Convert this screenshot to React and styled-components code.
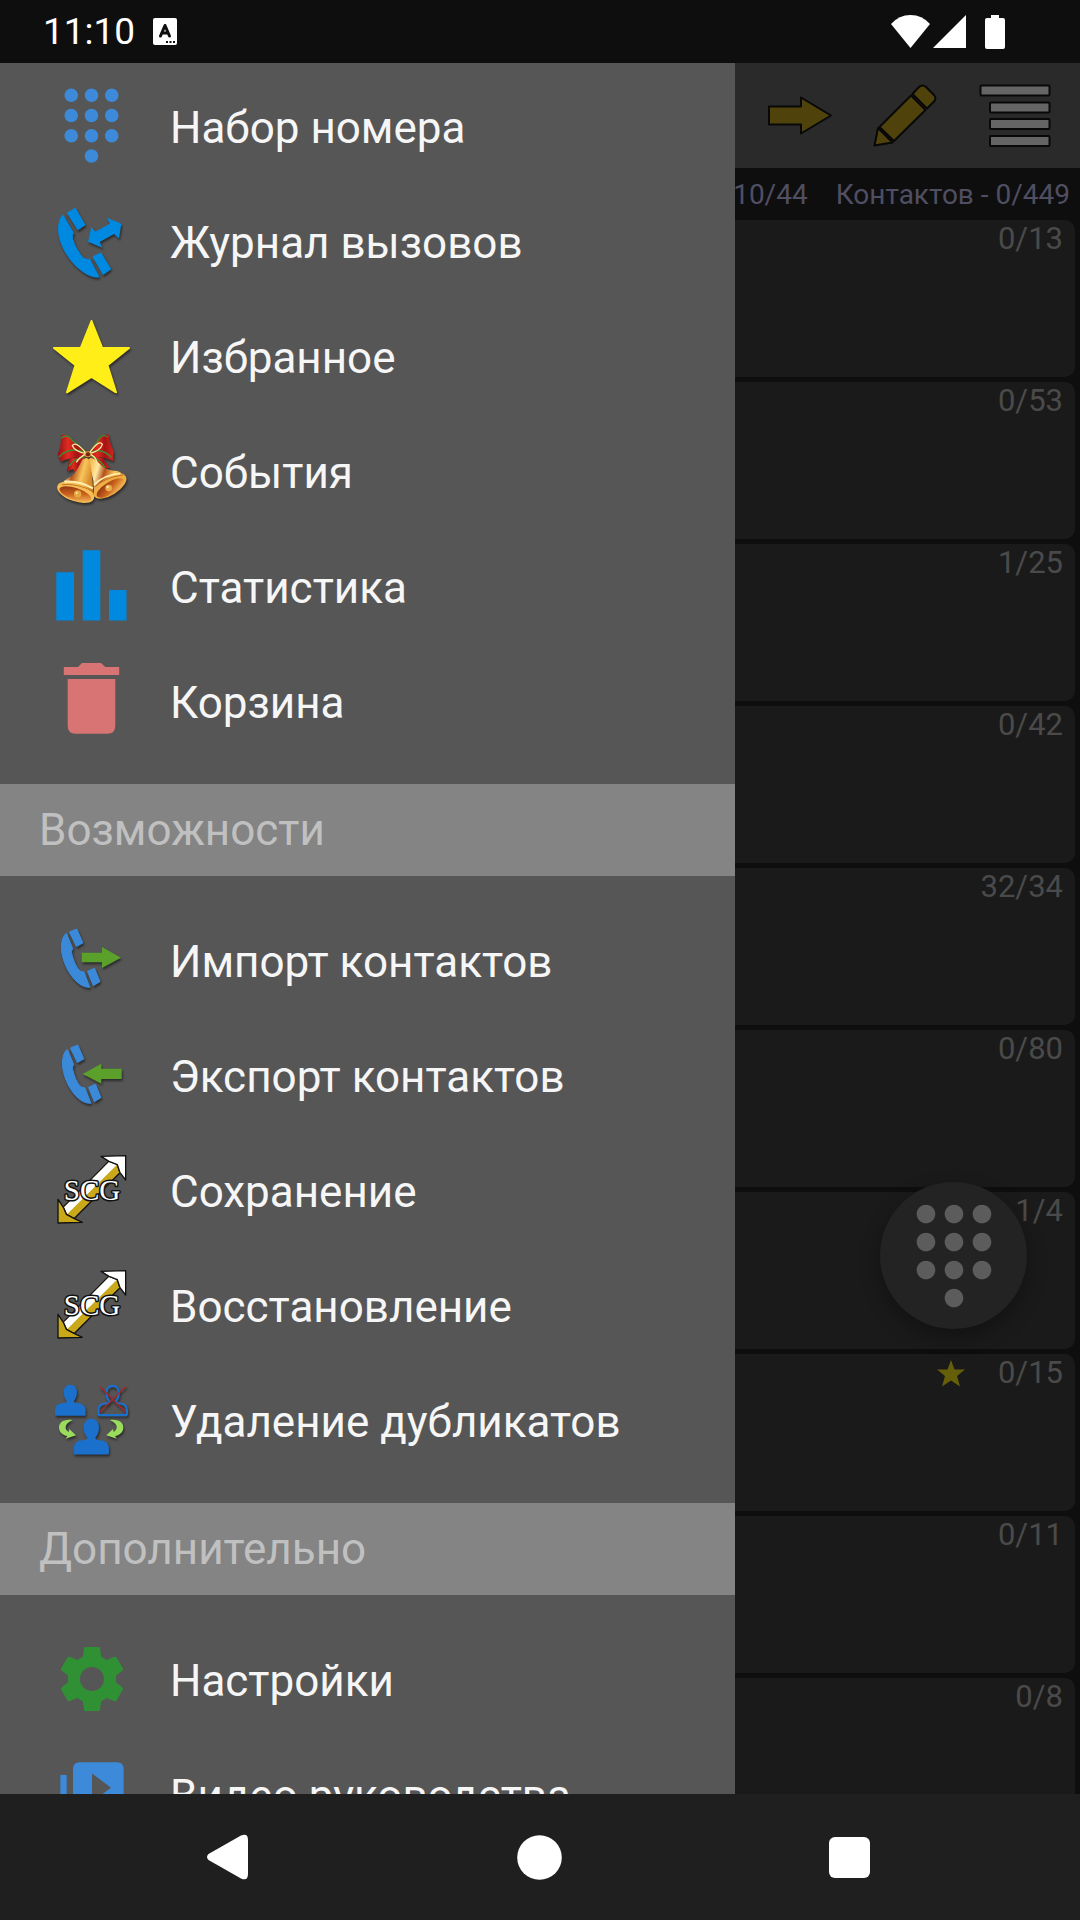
import React from "react";
import styled, { createGlobalStyle } from "styled-components";
import { MdDialpad, MdSettings, MdVideoLibrary } from "react-icons/md";

const GlobalStyle = createGlobalStyle`
  * {
    box-sizing: border-box;
  }

  body {
    margin: 0;
    background: #0e0e0e;
    font-family: Roboto, "Noto Sans", sans-serif;
  }

  button {
    border: 0;
    padding: 0;
    background: none;
    font: inherit;
    color: inherit;
  }

  svg {
    display: block;
    flex: none;
  }
`;

const Screen = styled.div`
  display: flex;
  flex-direction: column;
  height: 100vh;
  overflow: hidden;
`;

const StatusBar = styled.header`
  display: flex;
  align-items: center;
  flex: none;
  height: 63px;
  padding: 0 75px 0 43px;
  color: #fff;
  font-size: 37px;

  .badge {
    margin-left: 18px;
  }

  .signals {
    display: flex;
    margin-left: auto;
  }
`;

const Main = styled.main`
  position: relative;
  flex: 1;
  min-height: 0;
  overflow: hidden;
`;

const Toolbar = styled.div`
  display: flex;
  justify-content: flex-end;
  height: 105px;
  padding-right: 17px;
  background: #2a2a2a;
`;

const Totals = styled.div`
  display: flex;
  align-items: center;
  justify-content: flex-end;
  gap: 28px;
  height: 52px;
  padding-right: 10px;
  color: #504e62;
  font-size: 28px;
`;

const GroupList = styled.ul`
  display: flex;
  flex-direction: column;
  gap: 5px;
  margin: 0;
  padding: 0 5px;
  list-style: none;
`;

const GroupCard = styled.li`
  display: flex;
  align-items: flex-start;
  justify-content: flex-end;
  gap: 33px;
  height: 157px;
  padding-right: 12px;
  border-radius: 10px;
  background: #1a1a1a;
  color: #4a4a4a;
  font-size: 31px;
  line-height: 38px;
`;

const DialButton = styled.button`
  position: absolute;
  right: 53px;
  bottom: 465px;
  display: flex;
  align-items: center;
  justify-content: center;
  width: 147px;
  height: 147px;
  border-radius: 50%;
  background: #232323;
  color: #5c5c5c;
  box-shadow: 0 8px 20px rgba(0, 0, 0, 0.3);
`;

const Drawer = styled.nav`
  position: absolute;
  top: 0;
  bottom: 0;
  left: 0;
  width: 735px;
  max-width: 85%;
  overflow: hidden;
  background: #565656;
`;

const MenuGroup = styled.div`
  padding: ${({ $first }) => ($first ? "5px" : "26px")} 0 26px;
`;

const MenuTitle = styled.h2`
  display: flex;
  align-items: center;
  height: 92px;
  margin: 0;
  padding: 0 39px;
  background: #848484;
  color: #c0c0c0;
  font-size: 44px;
  font-weight: 400;
`;

const MenuItem = styled.button`
  display: flex;
  align-items: center;
  gap: 38px;
  width: 100%;
  height: 115px;
  padding: 0 51px;
  color: #f6f6f6;
  font-size: 44px;
  text-align: left;
  white-space: nowrap;
`;

const IconSlot = styled.span`
  display: flex;
  align-items: center;
  justify-content: center;
  flex: none;
  width: 81px;
  height: 81px;
`;

const MenuLabel = styled.span`
  padding-top: 4px;
`;

const NavBar = styled.footer`
  display: flex;
  flex: none;
  height: 126px;
  padding: 0 75px 0 73px;
  background: #1f1f1f;

  button {
    display: flex;
    flex: 1;
    align-items: center;
    justify-content: center;
  }
`;

const Shadowed = styled.svg`
  overflow: visible;
  filter: drop-shadow(1px 2px 1px rgba(0, 0, 0, 0.5));
`;

const CallLogIcon = () => (
  <Shadowed width="81" height="81" viewBox="0 0 81 81" fill="#0089e0" stroke="#0089e0" strokeLinejoin="round">
    <path d="M12.3 15.5 22.5 33.3Q20.5 35.5 21.6 39C24 47 28 53.5 32.3 58L35 59.5 38.5 59 48 77C32 79 7.5 52 7.5 29Q8 19 11.5 15.5Z" />
    <path strokeWidth="2" d="M17 13 24 9 33.3 24.7 27 29Z" />
    <path strokeWidth="2" d="M42.7 57 49.7 53.7 59 69 52.3 73.7Z" />
    <path
      strokeWidth="0"
      d="M70.3 23.7 56 17.7 58.7 23.7 44.3 31.7 40.3 27 37 41.7 51.3 47.7 48.7 42 63 34 68 38.5Z"
    />
  </Shadowed>
);

const Handset = () => (
  <g fill="#3b8ada" stroke="#3b8ada" strokeLinejoin="round">
    <path d="M15.5 14.5 21.7 29.5Q20 32 20.8 35C22.5 42 25 48 29 52L33 53 38.9 68.3C25 69.5 10.4 46 10.4 28Q10.8 18 15 14.5Z" />
    <path strokeWidth="2" d="M19.2 13.3 25.6 10.8 31.2 23.7 25.6 26.8Z" />
    <path strokeWidth="2" d="M37.2 52.6 43.2 50 48.3 62.3 42.6 66Z" />
  </g>
);

const ImportIcon = () => (
  <Shadowed width="81" height="81" viewBox="0 0 81 81">
    <Handset />
    <path fill="#5aa02a" d="M30.7 33.7H51V28L70 38.7 51 49V43.3H30.7Z" />
  </Shadowed>
);

const ExportIcon = () => (
  <Shadowed width="81" height="81" viewBox="0 0 81 81">
    <g transform="translate(1 1)">
      <Handset />
    </g>
    <path fill="#5aa02a" d="M31.7 40 50.3 29.7V34.7H70.7V45H50.3V49.7Z" />
  </Shadowed>
);

const StarIcon = () => (
  <Shadowed width="81" height="81" viewBox="0 0 81 81">
    <path
      fill="#ffee18"
      stroke="#ffee18"
      strokeWidth="2"
      strokeLinejoin="round"
      d="M40.5 6 51.3 33H78L56.5 50.3 65 77.3 40.5 62 16 77.3 24.5 50.3 3 33H29.7Z"
    />
  </Shadowed>
);

const BellsIcon = () => (
  <Shadowed width="81" height="81" viewBox="0 -5 243 243">
    <defs>
      <linearGradient id="gold" x1="0" x2="1" y1="0" y2="0.3">
        <stop offset="0" stopColor="#f3a934" />
        <stop offset="0.3" stopColor="#ffe9a0" />
        <stop offset="0.5" stopColor="#b5501c" />
        <stop offset="0.75" stopColor="#f9c65c" />
        <stop offset="1" stopColor="#d98a2b" />
      </linearGradient>
      <linearGradient id="ribbon" x1="0" x2="1" y1="0" y2="0">
        <stop offset="0" stopColor="#8f1012" />
        <stop offset="0.35" stopColor="#e22c22" />
        <stop offset="0.65" stopColor="#a51315" />
        <stop offset="1" stopColor="#cf261e" />
      </linearGradient>
      <linearGradient id="inside" x1="0" x2="1" y1="0" y2="1">
        <stop offset="0" stopColor="#7c2812" />
        <stop offset="0.5" stopColor="#c9601c" />
        <stop offset="1" stopColor="#ffd36a" />
      </linearGradient>
    </defs>
    {/* ribbon tails */}
    <path fill="url(#ribbon)" d="M55 82 98 72 100 98 76 128 66 112 48 120Z" />
    <path fill="url(#ribbon)" d="M122 72 156 80 176 108 160 110 152 128 136 116 122 100Z" />
    {/* back bell */}
    <path fill="url(#gold)" d="M112 84C120 72 134 84 154 104Q172 118 200 118L222 130 128 196Q132 140 116 112Z" />
    <ellipse cx="177" cy="164" rx="56" ry="26" transform="rotate(-32 177 164)" fill="#efad42" />
    <ellipse cx="178" cy="169" rx="47" ry="18" transform="rotate(-32 178 169)" fill="url(#inside)" />
    <path fill="none" stroke="#fff0b2" strokeWidth="5" d="M129 160Q156 130 208 125" />
    <path fill="none" stroke="#a65016" strokeWidth="2" d="M128 168Q160 138 216 130" />
    <circle cx="173" cy="169" r="10" fill="#eab04f" />
    <circle cx="170" cy="166" r="3" fill="#fff2c5" />
    {/* front bell */}
    <path fill="url(#gold)" d="M94 84Q110 72 116 88Q126 128 126 194L20 172Q38 144 62 134Q78 118 94 84Z" />
    <ellipse cx="74" cy="182" rx="58" ry="27" transform="rotate(19 74 182)" fill="#f5bf55" />
    <ellipse cx="73" cy="187" rx="50" ry="18" transform="rotate(19 73 187)" fill="url(#inside)" />
    <path fill="none" stroke="#fff0b2" strokeWidth="6" d="M40 150Q84 146 126 170" />
    <path fill="none" stroke="#a65016" strokeWidth="2" d="M32 159Q80 154 127 180" />
    <circle cx="80" cy="187" r="11" fill="#e4a83c" />
    <circle cx="77" cy="184" r="3" fill="#fff2c5" />
    {/* bow */}
    <path fill="url(#ribbon)" d="M30 10Q52 6 68 30L110 60 106 78Q64 72 30 90L20 68Q32 40 30 10Z" />
    <path fill="url(#ribbon)" d="M172 8Q152 8 140 26L112 60 116 78Q150 72 186 88L188 60Q176 34 172 8Z" />
    <path
      fill="none"
      stroke="#3f8f2e"
      strokeWidth="4"
      d="M30 20Q48 4 64 26L106 62M24 76Q58 40 106 66M170 16Q152 4 142 26L114 62M182 78Q150 44 114 66M54 104Q66 82 104 74M162 108Q150 84 118 74"
    />
    <path
      fill="none"
      stroke="#ffe9a0"
      strokeWidth="4"
      d="M106 66Q74 26 64 42Q72 60 106 66Q84 78 76 92M114 66Q144 22 154 38Q148 58 114 66Q134 74 138 92"
    />
    <circle cx="111" cy="68" r="8" fill="#7d2410" stroke="#d9a23c" strokeWidth="3" />
  </Shadowed>
);

const StatsIcon = () => (
  <svg width="81" height="81" viewBox="0 0 81 81" fill="#008adf">
    <path d="M5.3 27.3H23V75.5H5.3ZM31.7 5.3H49.3V75.5H31.7ZM58 45H75.5V75.5H58Z" />
  </svg>
);

const TrashIcon = () => (
  <svg width="81" height="81" viewBox="0 0 81 81" fill="#d87474">
    <path d="M12.8 7H27L31 3H50L54.3 7H68.2V15H12.8Z" />
    <path d="M16.7 19H64.3V66Q64.3 73.7 56.5 73.7H24.5Q16.7 73.7 16.7 66Z" />
  </svg>
);

const ScgIcon = () => (
  <svg width="81" height="81" viewBox="33 387 243 243">
    <g stroke="#111" strokeWidth="4" strokeLinejoin="round">
      <path fill="#c9a81a" d="M70 562 207 424 232 434 240 458 102 596 80 584Z" />
      <path fill="#fff" stroke="none" d="M72 562 207 426 230 435 82 582Z" />
      <path fill="#c9a81a" d="M54 538V609L127 607 102 595 79 583 70 562Z" />
      <path fill="#fff" d="M183 409 257 407V480L240 458 232 434 207 424Z" />
    </g>
    <text
      x="156"
      y="539"
      textAnchor="middle"
      fontFamily="Liberation Serif, serif"
      fontSize="87"
      fill="#fff"
      stroke="#111"
      strokeWidth="9"
      strokeLinejoin="round"
      paintOrder="stroke"
    >
      SCG
    </text>
  </svg>
);

const person =
  "M0 2C13 2 20 12 20 25C20 38 15 46 11 51V54Q13 57 24 58C40 59 46 69 46 80V92Q46 95 43 95H-43Q-46 95-46 92V80C-46 69-40 59-24 58Q-13 57-11 54V51C-15 46-20 38-20 25C-20 12-13 2 0 2Z";

const DuplicatesIcon = () => (
  <Shadowed width="81" height="81" viewBox="3 -3 243 243">
    <path d={person} fill="#1a70cb" transform="translate(61 12)" />
    <path
      d={person}
      fill="none"
      stroke="#1a70cb"
      strokeWidth="7"
      transform="translate(188 16) scale(.93 .94)"
    />
    <path d={person} fill="#1a70cb" transform="translate(124 114) scale(1.15 1.15)" />
    <path stroke="#a8282c" strokeWidth="4" d="M150 20 226 96M228 19 150 96" />
    <path
      id="swap"
      fill="#9bdc5c"
      d="M68 120C40 116 27 128 27 143C28 157 38 165 52 168L47 176 78 166 58 147 56 156C44 150 40 132 68 120Z"
    />
    <use href="#swap" transform="translate(247 0) scale(-1 1)" />
  </Shadowed>
);

const ArrowIcon = () => (
  <svg width="105" height="105" viewBox="0 0 105 105">
    <path
      fill="#4f420b"
      stroke="#080808"
      strokeWidth="2"
      strokeLinejoin="round"
      d="M21 43.5H53V34.5L83 52.5 53 70.5V61.5H21Z"
    />
  </svg>
);

const PencilIcon = () => (
  <svg width="105" height="105" viewBox="0 0 105 105">
    <g fill="#4f420b" stroke="#080808" strokeWidth="2" strokeLinejoin="round">
      <path d="M59.5 31 65 25Q69 20.5 73 24L81 32Q84 36 80.5 39L74 45.5Z" />
      <path d="M58 32.5 72.5 47 41 78 26.5 64Z" />
      <path d="M25 65 39.5 79.5 21.5 82.5Z" />
    </g>
  </svg>
);

const ListIcon = () => (
  <svg width="105" height="105" viewBox="0 0 105 105">
    <g fill="#656565" stroke="#080808" strokeWidth="2">
      <rect x="22.5" y="22.5" width="69" height="10" rx="1" />
      <rect x="32" y="39.5" width="59.5" height="10" rx="1" />
      <rect x="32" y="56" width="59.5" height="10" rx="1" />
      <rect x="32" y="73" width="59.5" height="10" rx="1" />
    </g>
  </svg>
);

const menu = [
  {
    items: [
      { label: "Набор номера", icon: <MdDialpad size={81} color="#3c8ad9" /> },
      { label: "Журнал вызовов", icon: <CallLogIcon /> },
      { label: "Избранное", icon: <StarIcon /> },
      { label: "События", icon: <BellsIcon /> },
      { label: "Статистика", icon: <StatsIcon /> },
      { label: "Корзина", icon: <TrashIcon /> },
    ],
  },
  {
    title: "Возможности",
    items: [
      { label: "Импорт контактов", icon: <ImportIcon /> },
      { label: "Экспорт контактов", icon: <ExportIcon /> },
      { label: "Сохранение", icon: <ScgIcon /> },
      { label: "Восстановление", icon: <ScgIcon /> },
      { label: "Удаление дубликатов", icon: <DuplicatesIcon /> },
    ],
  },
  {
    title: "Дополнительно",
    items: [
      { label: "Настройки", icon: <MdSettings size={80} color="#2f9134" /> },
      { label: "Видео руководства", icon: <MdVideoLibrary size={76} color="#3c8ad9" /> },
    ],
  },
];

const groups = [
  { count: "0/13" },
  { count: "0/53" },
  { count: "1/25" },
  { count: "0/42" },
  { count: "32/34" },
  { count: "0/80" },
  { count: "1/4" },
  { count: "0/15", starred: true },
  { count: "0/11" },
  { count: "0/8" },
];

const App = () => {
  return (
    <Screen>
      <GlobalStyle />
      <StatusBar>
        <span>11:10</span>
        <svg className="badge" width="24" height="27" viewBox="0 0 24 27">
          <rect width="24" height="27" rx="2" fill="#fff" />
          <path
            fill="none"
            stroke="#0e0e0e"
            strokeWidth="3"
            strokeLinecap="round"
            strokeLinejoin="round"
            d="M7.5 18 12 7.5 16.5 18M9 15H15"
          />
          <path fill="#0e0e0e" d="M13 23h2v2h-2zM16.5 23h2v2h-2zM20 23h2v2h-2z" />
        </svg>
        <svg className="signals" width="114" height="34" viewBox="0 0 114 34" fill="#fff">
          <path d="M0 9Q8 0 19.5 0T39 9L19.5 33Z" />
          <path d="M42 33 75 0V33Z" />
          <path d="M100 0h8v3h4q2 0 2 2v27q0 2-2 2H96q-2 0-2-2V5q0-2 2-2h4Z" />
        </svg>
      </StatusBar>

      <Main>
        <Toolbar>
          <button type="button" aria-label="Далее">
            <ArrowIcon />
          </button>
          <button type="button" aria-label="Изменить">
            <PencilIcon />
          </button>
          <button type="button" aria-label="Меню">
            <ListIcon />
          </button>
        </Toolbar>
        <Totals>
          <span>10/44</span>
          <span>Контактов - 0/449</span>
        </Totals>
        <GroupList>
          {groups.map(({ count, starred }) => (
            <GroupCard key={count}>
              {starred && (
                <svg width="28" height="38" viewBox="0 0 28 38">
                  <path
                    fill="#665f0a"
                    d="M14 6 17.5 15.5H28L20 22 23 32.5 14 26.5 5 32.5 8 22 0 15.5H10.5Z"
                  />
                </svg>
              )}
              <span>{count}</span>
            </GroupCard>
          ))}
        </GroupList>
        <DialButton type="button" aria-label="Набор номера">
          <MdDialpad size={112} />
        </DialButton>

        <Drawer>
          {menu.map(({ title, items }) => (
            <React.Fragment key={title || "main"}>
              {title && <MenuTitle>{title}</MenuTitle>}
              <MenuGroup $first={!title}>
                {items.map(({ label, icon }) => (
                  <MenuItem type="button" key={label}>
                    <IconSlot>{icon}</IconSlot>
                    <MenuLabel>{label}</MenuLabel>
                  </MenuItem>
                ))}
              </MenuGroup>
            </React.Fragment>
          ))}
        </Drawer>
      </Main>

      <NavBar>
        <button type="button" aria-label="Назад">
          <svg width="42" height="46" viewBox="0 0 42 46" fill="#fff">
            <path d="M1.5 20 34 1.5Q41 -1.5 41 6V40Q41 47.5 34 44.5L1.5 26Q-1.5 23 1.5 20Z" />
          </svg>
        </button>
        <button type="button" aria-label="Домой">
          <svg width="45" height="45" viewBox="0 0 45 45" fill="#fff">
            <circle cx="22.5" cy="22.5" r="22.3" />
          </svg>
        </button>
        <button type="button" aria-label="Обзор">
          <svg width="41" height="41" viewBox="0 0 41 41" fill="#fff">
            <rect width="41" height="41" rx="6" />
          </svg>
        </button>
      </NavBar>
    </Screen>
  );
};

export default App;
